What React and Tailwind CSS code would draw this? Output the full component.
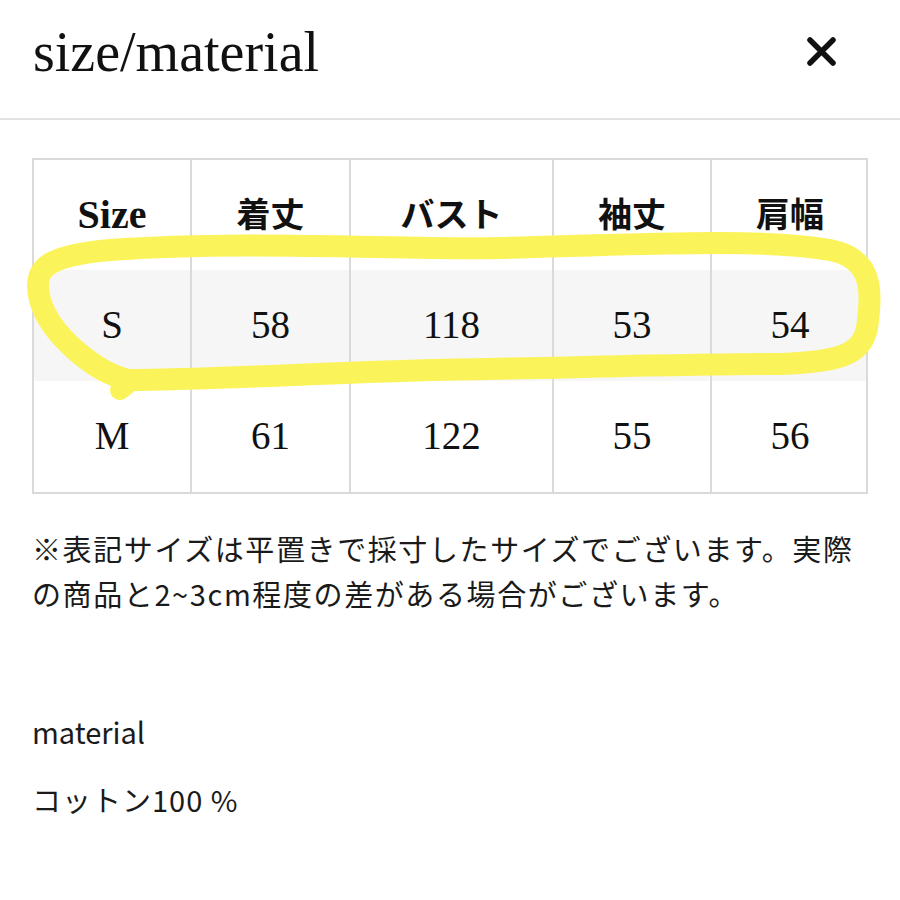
import React from 'react';

const serif = { fontFamily: '"Liberation Serif", "Noto Sans CJK JP", serif' };
const sans = { fontFamily: '"Noto Sans CJK JP", "Noto Sans", sans-serif' };

const headers = ['Size', '着丈', 'バスト', '袖丈', '肩幅'];
const rows = [
  { bg: 'bg-[#f6f6f6]', cells: ['S', '58', '118', '53', '54'] },
  { bg: 'bg-white', cells: ['M', '61', '122', '55', '56'] },
];

function CloseIcon() {
  return (
    <svg width="30" height="30" viewBox="0 0 30 30" fill="none">
      <path d="M3 3 L26 26 M26 3 L3 26" stroke="#111" strokeWidth="5.5" strokeLinecap="round" />
    </svg>
  );
}

function SizeTable() {
  const cols = 'grid grid-cols-[156px_159px_203px_158px_158px]';
  return (
    <div className="border-2 border-[#dadada] w-[836px]">
      <div className={`${cols} h-[110px]`}>
        {headers.map((h, i) => (
          <div
            key={h}
            className={`flex items-center justify-center font-bold text-[#111] ${i === 0 ? 'text-[40px]' : 'text-[34px]'} ${i > 0 ? 'border-l-2 border-[#dadada]' : ''}`}
            style={serif}
          >
            {h}
          </div>
        ))}
      </div>
      {rows.map((r) => (
        <div key={r.cells[0]} className={`${cols} h-[111px] ${r.bg}`}>
          {r.cells.map((c, i) => (
            <div
              key={i}
              className={`flex items-center justify-center text-[39px] text-[#111] ${i > 0 ? 'border-l-2 border-[#dadada]' : ''}`}
              style={serif}
            >
              {c}
            </div>
          ))}
        </div>
      ))}
    </div>
  );
}

export default function App() {
  return (
    <div className="relative w-[900px] h-[900px] bg-white overflow-hidden">
      {/* header */}
      <div className="flex items-center justify-between h-[120px] pl-[33px] pr-[63px] pb-[14px] border-b-2 border-[#e2e2e2]">
        <h1 className="text-[56px] leading-none text-[#111]" style={serif}>size/material</h1>
        <CloseIcon />
      </div>

      <div className="px-[32px] pt-[38px]">
        <SizeTable />

        <p className="mt-[32px] text-[29px] leading-[45px] tracking-[1.6px] text-[#1a1a1a]" style={sans}>
          ※表記サイズは平置きで採寸したサイズでございます。実際の商品と2~3cm程度の差がある場合がございます。
        </p>

        <p className="mt-[95px] text-[29px] leading-[40px] text-[#1a1a1a]" style={sans}>material</p>
        <p className="mt-[28px] text-[29px] leading-[40px] tracking-[1px] text-[#1a1a1a]" style={sans}>コットン100 %</p>
      </div>

      {/* yellow hand-drawn highlight */}
      <svg className="absolute left-0 top-0 pointer-events-none" width="900" height="900" viewBox="0 0 900 900" fill="none">
        <path
          d="M430 370 C300 374 200 380 128 380 C95 372 50 335 40 300 C32 268 45 256 110 250 C250 240 400 250 500 248 C650 244 760 238 830 250 C872 258 872 290 868 320 C866 355 840 362 780 364 C680 364 560 368 430 370"
          stroke="#fbf35a"
          strokeWidth="22"
          strokeLinecap="round"
          strokeLinejoin="round"
        />
        <path d="M130 382 L120 390" stroke="#fbf35a" strokeWidth="20" strokeLinecap="round" />
      </svg>
    </div>
  );
}
